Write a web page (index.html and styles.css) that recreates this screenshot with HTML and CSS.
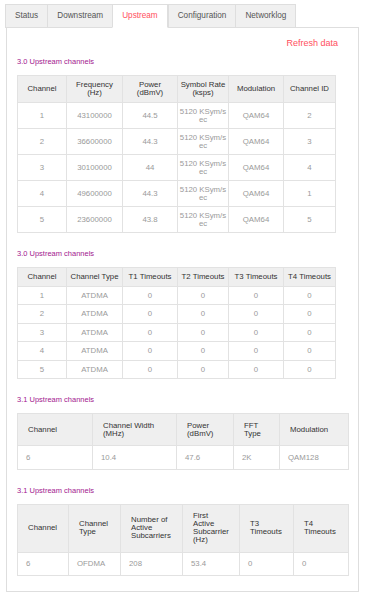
FILE: index.html
```html
<!DOCTYPE html>
<html lang="en">

<head>
    <meta charset="UTF-8">
    <meta name="viewport" content="width=device-width, initial-scale=1.0">
    <title>Upstream</title>
    <link rel="stylesheet" href="styles.css">
</head>

<body>
    <div class="page">
        <!-- Tabs -->
        <div class="tabs">
            <div class="tab">Status</div>
            <div class="tab">Downstream</div>
            <div class="tab active">Upstream</div>
            <div class="tab">Configuration</div>
            <div class="tab">Networklog</div>
        </div>

        <div class="panel">
            <div class="refresh"><a href="#">Refresh data</a></div>

            <!-- 3.0 channels -->
            <h3 class="section-title">3.0 Upstream channels</h3>
            <table class="grid compact">
                <colgroup>
                    <col style="width: 49px">
                    <col style="width: 56px">
                    <col style="width: 55px">
                    <col style="width: 51px">
                    <col style="width: 55px">
                    <col style="width: 52px">
                </colgroup>
                <tr>
                    <th>Channel</th>
                    <th>Frequency<br>(Hz)</th>
                    <th>Power<br>(dBmV)</th>
                    <th>Symbol Rate<br>(ksps)</th>
                    <th>Modulation</th>
                    <th>Channel ID</th>
                </tr>
                <tr><td>1</td><td>43100000</td><td>44.5</td><td class="rate">5120 KSym/sec</td><td>QAM64</td><td>2</td></tr>
                <tr><td>2</td><td>36600000</td><td>44.3</td><td class="rate">5120 KSym/sec</td><td>QAM64</td><td>3</td></tr>
                <tr><td>3</td><td>30100000</td><td>44</td><td class="rate">5120 KSym/sec</td><td>QAM64</td><td>4</td></tr>
                <tr><td>4</td><td>49600000</td><td>44.3</td><td class="rate">5120 KSym/sec</td><td>QAM64</td><td>1</td></tr>
                <tr><td>5</td><td>23600000</td><td>43.8</td><td class="rate">5120 KSym/sec</td><td>QAM64</td><td>5</td></tr>
            </table>

            <h3 class="section-title">3.0 Upstream channels</h3>
            <table class="grid compact timeouts">
                <colgroup>
                    <col style="width: 49px">
                    <col style="width: 56px">
                    <col style="width: 55px">
                    <col style="width: 51px">
                    <col style="width: 55px">
                    <col style="width: 52px">
                </colgroup>
                <tr>
                    <th>Channel</th>
                    <th>Channel Type</th>
                    <th>T1 Timeouts</th>
                    <th>T2 Timeouts</th>
                    <th>T3 Timeouts</th>
                    <th>T4 Timeouts</th>
                </tr>
                <tr><td>1</td><td>ATDMA</td><td>0</td><td>0</td><td>0</td><td>0</td></tr>
                <tr><td>2</td><td>ATDMA</td><td>0</td><td>0</td><td>0</td><td>0</td></tr>
                <tr><td>3</td><td>ATDMA</td><td>0</td><td>0</td><td>0</td><td>0</td></tr>
                <tr><td>4</td><td>ATDMA</td><td>0</td><td>0</td><td>0</td><td>0</td></tr>
                <tr><td>5</td><td>ATDMA</td><td>0</td><td>0</td><td>0</td><td>0</td></tr>
            </table>

            <!-- 3.1 channels -->
            <h3 class="section-title">3.1 Upstream channels</h3>
            <table class="grid wide">
                <colgroup>
                    <col style="width: 75px">
                    <col style="width: 84px">
                    <col style="width: 57px">
                    <col style="width: 46px">
                    <col style="width: 69px">
                </colgroup>
                <tr>
                    <th>Channel</th>
                    <th>Channel Width<br>(MHz)</th>
                    <th>Power<br>(dBmV)</th>
                    <th>FFT<br>Type</th>
                    <th>Modulation</th>
                </tr>
                <tr><td>6</td><td>10.4</td><td>47.6</td><td>2K</td><td>QAM128</td></tr>
            </table>

            <h3 class="section-title">3.1 Upstream channels</h3>
            <table class="grid wide">
                <colgroup>
                    <col style="width: 51px">
                    <col style="width: 52px">
                    <col style="width: 62px">
                    <col style="width: 57px">
                    <col style="width: 54px">
                    <col style="width: 55px">
                </colgroup>
                <tr>
                    <th>Channel</th>
                    <th>Channel<br>Type</th>
                    <th>Number of<br>Active<br>Subcarriers</th>
                    <th>First<br>Active<br>Subcarrier<br>(Hz)</th>
                    <th>T3<br>Timeouts</th>
                    <th>T4<br>Timeouts</th>
                </tr>
                <tr><td>6</td><td>OFDMA</td><td>208</td><td>53.4</td><td>0</td><td>0</td></tr>
            </table>
        </div>
    </div>
</body>

</html>
```

FILE: styles.css
```css
body {
    margin: 0;
    font-family: "Liberation Sans", Arial, sans-serif;
    background-color: #fff;
}

.page {
    padding: 4px 0 0 5px;
}

/* Tabs */
.tabs {
    display: flex;
    margin-bottom: -1px;
}

.tab {
    position: relative;
    box-sizing: border-box;
    height: 24px;
    padding: 0 9px;
    margin-right: -1px;
    border: 1px solid #dedede;
    background-color: #f0f0f0;
    color: #555;
    font-size: 8.2px;
    line-height: 22px;
}

.tab.active {
    background-color: #fff;
    border-bottom-color: #fff;
    color: #ff4f5e;
    margin-right: 0;
}

/* Panel */
.panel {
    box-sizing: border-box;
    width: 353px;
    margin-left: 1px;
    padding: 9px 10px 15px 10px;
    border: 1px solid #dedede;
}

.refresh {
    text-align: right;
    padding-right: 10px;
    font-size: 9px;
    line-height: 12px;
}

.refresh a {
    color: #ff4f5e;
    text-decoration: none;
}

.section-title {
    margin: 16px 0 8px;
    font-size: 7.5px;
    font-weight: normal;
    line-height: 10px;
    color: #a3208f;
}

.refresh + .section-title {
    margin-top: 8px;
}

/* Tables */
.grid {
    border-collapse: collapse;
    table-layout: fixed;
    font-size: 7.8px;
    line-height: 8px;
}

.grid th,
.grid td {
    border: 1px solid #e2e2e2;
}

.grid th {
    background-color: #efefef;
    color: #333;
    font-weight: normal;
}

.grid td {
    color: #9a9a9a;
}

.grid.compact {
    width: 318px;
}

.grid.compact th,
.grid.compact td {
    padding: 5px 2px;
    height: 8px;
    text-align: center;
}

.grid.compact.timeouts th,
.grid.compact.timeouts td {
    padding: 5px 2px 4.5px;
}

.grid.compact td.rate {
    padding: 0 1px;
    height: 25px;
    word-break: break-all;
}

.grid.wide {
    width: 331px;
}

.grid.wide th {
    padding: 7.5px 8px 7.5px 10px;
    text-align: left;
}

.grid.wide td {
    padding: 7.5px 8px 7px;
    text-align: left;
}
```
